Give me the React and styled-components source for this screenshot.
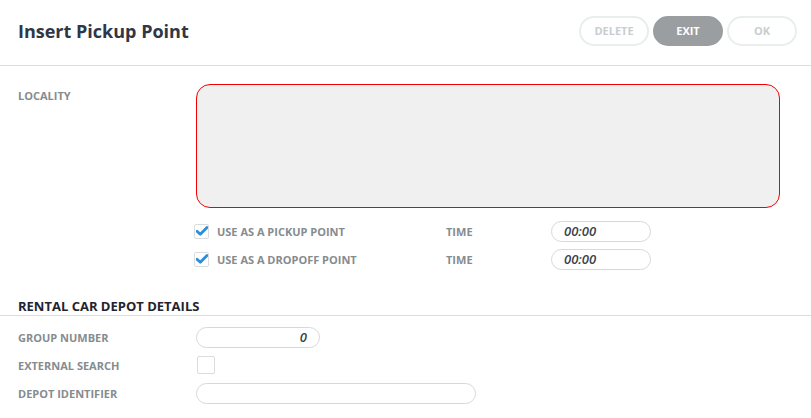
import React from "react";
import styled, { createGlobalStyle } from "styled-components";

const Global = createGlobalStyle`
  body {
    margin: 0;
    background: #ffffff;
    font-family: "Open Sans", "Liberation Sans", sans-serif;
  }
`;

const Page = styled.div`
  width: 811px;
  height: 418px;
  overflow: hidden;
  background: #fff;
`;

const Header = styled.div`
  height: 65px;
  display: flex;
  align-items: center;
  justify-content: space-between;
  padding: 0 14px 0 18px;
  border-bottom: 1px solid #dedbe9;
`;

const Title = styled.h1`
  margin: 0;
  margin-top: -4px;
  font-size: 18px;
  font-weight: 700;
  color: #303646;
`;

const Buttons = styled.div`
  display: flex;
  gap: 4px;
  margin-top: -4px;
`;

const Btn = styled.button`
  width: 70px;
  height: 30px;
  border-radius: 15px;
  font-family: inherit;
  font-size: 11px;
  font-weight: 700;
  border: 2px solid ${(p) => (p.$primary ? "#9a9ea1" : "#e9eeed")};
  background: ${(p) => (p.$primary ? "#9a9ea1" : "#fff")};
  color: ${(p) => (p.$primary ? "#fff" : "#c9cdcf")};
  padding: 0;
`;

const Form = styled.div`
  padding: 18px 0 0 18px;
`;

const Row = styled.div`
  display: grid;
  grid-template-columns: 178px 1fr;
  align-items: ${(p) => (p.$top ? "start" : "center")};
  height: ${(p) => p.$h || "28px"};
`;

const Label = styled.div`
  font-size: 11px;
  font-weight: 700;
  color: #858c8f;
  padding-top: ${(p) => p.$pt || "0"};
`;

const TextArea = styled.div`
  width: 582px;
  height: 122px;
  border: 1px solid #f00000;
  border-radius: 14px;
  background: #f0f0f0;
`;

const Options = styled.div`
  padding: 9px 0 0 194px;
`;

const OptRow = styled.div`
  display: flex;
  align-items: center;
  height: 28px;
`;

const Check = styled.span`
  width: ${(p) => p.$size || 15}px;
  height: ${(p) => p.$size || 15}px;
  border: 1px solid #dcdcdc;
  border-radius: 2px;
  display: inline-flex;
  align-items: center;
  justify-content: center;
  box-sizing: border-box;
  flex: none;
`;

const OptLabel = styled.span`
  font-size: 11px;
  font-weight: 700;
  color: #858c8f;
  margin-left: 8px;
  width: 229px;
`;

const TimeLabel = styled.span`
  font-size: 11px;
  font-weight: 700;
  color: #858c8f;
  width: 105px;
`;

const Input = styled.div`
  width: ${(p) => p.$w}px;
  height: 21px;
  border: 1px solid #d8d8d8;
  border-radius: 11px;
  box-sizing: border-box;
  display: flex;
  align-items: center;
  justify-content: ${(p) => (p.$right ? "flex-end" : "flex-start")};
  padding: 0 12px;
  font-size: 13px;
  font-style: italic;
  font-weight: 600;
  color: #3a3f48;
`;

const Section = styled.div`
  margin-top: 24px;
  padding: 0 0 0 18px;
  border-bottom: 1px solid #dedbe9;
  font-size: 13px;
  font-weight: 700;
  color: #1f2431;
`;

const Details = styled.div`
  padding: 7px 0 0 18px;
`;

const Tick = () => (
  <svg width="12" height="10" viewBox="0 0 12 10">
    <path d="M1 5.2 L4.3 8.3 L11 1.5" fill="none" stroke="#2b8fd8" strokeWidth="2.8" strokeLinecap="round" strokeLinejoin="round" />
  </svg>
);

export default function App() {
  return (
    <Page>
      <Global />
      <Header>
        <Title>Insert Pickup Point</Title>
        <Buttons>
          <Btn>DELETE</Btn>
          <Btn $primary>EXIT</Btn>
          <Btn>OK</Btn>
        </Buttons>
      </Header>
      <Form>
        <Row $top $h="124px">
          <Label $pt="4px">LOCALITY</Label>
          <TextArea />
        </Row>
      </Form>
      <Options>
        <OptRow>
          <Check><Tick /></Check>
          <OptLabel>USE AS A PICKUP POINT</OptLabel>
          <TimeLabel>TIME</TimeLabel>
          <Input $w={100}>00:00</Input>
        </OptRow>
        <OptRow>
          <Check><Tick /></Check>
          <OptLabel>USE AS A DROPOFF POINT</OptLabel>
          <TimeLabel>TIME</TimeLabel>
          <Input $w={100}>00:00</Input>
        </OptRow>
      </Options>
      <Section>RENTAL CAR DEPOT DETAILS</Section>
      <Details>
        <Row>
          <Label>GROUP NUMBER</Label>
          <Input $w={124} $right>0</Input>
        </Row>
        <Row>
          <Label>EXTERNAL SEARCH</Label>
          <Check $size={18} style={{ marginLeft: 1 }} />
        </Row>
        <Row>
          <Label>DEPOT IDENTIFIER</Label>
          <Input $w={280} />
        </Row>
      </Details>
    </Page>
  );
}
